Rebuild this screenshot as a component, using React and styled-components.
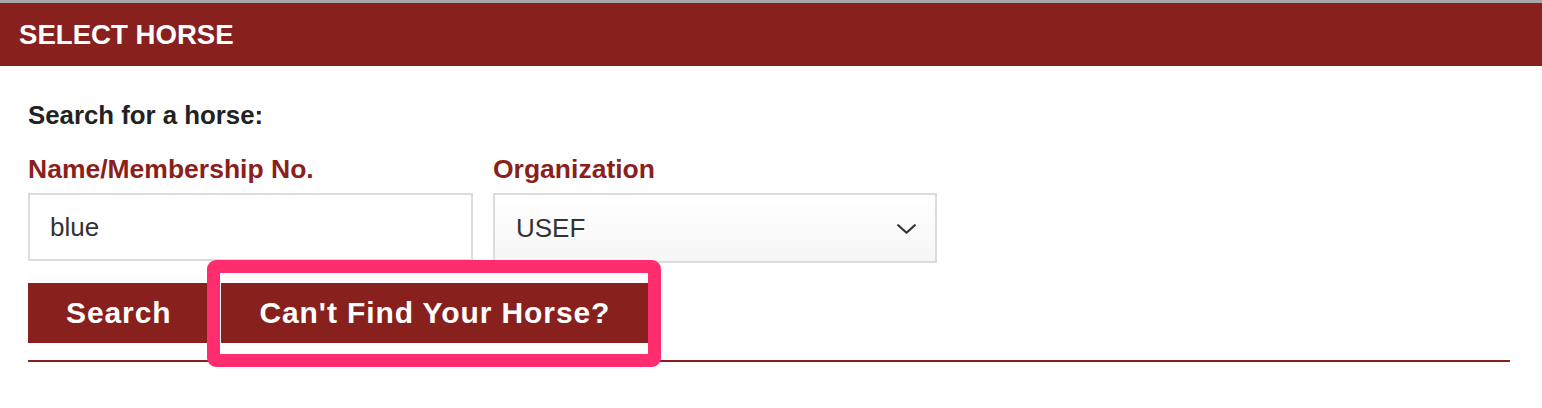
import React from "react";
import styled, { createGlobalStyle } from "styled-components";

const GlobalStyle = createGlobalStyle`
  html, body { margin: 0; padding: 0; background: #fff; }
  body { font-family: "Liberation Sans", Arial, Helvetica, sans-serif; }
  * { box-sizing: border-box; }
`;

const RED = "#88211e";

const Page = styled.div`
  width: 1542px;
  min-height: 408px;
  border-top: 3px solid #a8a8a8;
`;

const Header = styled.div`
  height: 63px;
  background: ${RED};
  display: flex;
  align-items: center;
  padding-left: 19px;
  color: #fff;
  font-weight: 700;
  font-size: 27.6px;
  line-height: 63px;
`;

const Body = styled.div`
  padding: 34px 32px 0 28px;
  display: flex;
  flex-direction: column;
`;

const Intro = styled.div`
  font-size: 25.8px;
  line-height: 30px;
  font-weight: 700;
  color: #222;
`;

const Fields = styled.div`
  display: flex;
  gap: 20px;
  margin-top: 24px;
  align-items: flex-start;
`;

const Field = styled.div`
  display: flex;
  flex-direction: column;
  gap: 9px;
  width: ${(p) => p.$w}px;
`;

const Label = styled.label`
  font-size: 26.5px;
  line-height: 30px;
  font-weight: 700;
  color: #8b1f1b;
`;

const TextInput = styled.input`
  height: 68px;
  width: 100%;
  border: 2px solid #dcdcdc;
  padding: 0 0 0 20px;
  font-family: "Liberation Sans", Arial, sans-serif;
  font-size: 26px;
  color: #333;
  background: #fff;
  outline: none;
`;

const SelectWrap = styled.div`
  position: relative;
  width: 100%;
`;

const Select = styled.select`
  appearance: none;
  -webkit-appearance: none;
  width: 100%;
  height: 70px;
  border: 2px solid #dcdcdc;
  border-radius: 0;
  padding: 0 0 0 21px;
  font-family: "Liberation Sans", Arial, sans-serif;
  font-size: 26px;
  color: #333;
  background: linear-gradient(#ffffff, #f6f6f6);
  outline: none;
`;

const Chevron = styled.svg`
  position: absolute;
  right: 21px;
  top: 31px;
  pointer-events: none;
`;

const Buttons = styled.div`
  display: flex;
  gap: 12px;
  margin-top: 20px;
  align-items: flex-start;
`;

const Button = styled.button`
  display: block;
  height: 60px;
  padding: 0 ${(p) => p.$pad}px;
  background: ${RED};
  color: #fff;
  border: none;
  font-family: "Liberation Sans", Arial, sans-serif;
  font-weight: 700;
  font-size: 30px;
  letter-spacing: 0.9px;
  cursor: pointer;
`;

const Marked = styled.div`
  position: relative;
  display: flex;
  height: 60px;
`;

const Highlight = styled.div`
  position: absolute;
  z-index: 2;
  left: -14px;
  right: -13px;
  top: -23px;
  bottom: -24px;
  border: 13px solid #ff2d6e;
  border-radius: 9px;
  pointer-events: none;
`;

const Rule = styled.hr`
  margin: 17px 0 0 0;
  border: none;
  height: 2px;
  background: ${RED};
  width: 100%;
`;

export default function App() {
  return (
    <>
      <GlobalStyle />
      <Page>
        <Header>SELECT HORSE</Header>
        <Body>
          <Intro>Search for a horse:</Intro>
          <Fields>
            <Field $w={445}>
              <Label>Name/Membership No.</Label>
              <TextInput defaultValue="blue" />
            </Field>
            <Field $w={444}>
              <Label>Organization</Label>
              <SelectWrap>
                <Select defaultValue="USEF">
                  <option value="USEF">USEF</option>
                  <option value="FEI">FEI</option>
                </Select>
                <Chevron width="19" height="10" viewBox="0 0 19 10">
                  <path d="M1.2 1.2 L9.5 8.8 L17.8 1.2" fill="none" stroke="#333" strokeWidth="2.2" strokeLinecap="round" strokeLinejoin="round" />
                </Chevron>
              </SelectWrap>
            </Field>
          </Fields>
          <Buttons>
            <Button $pad={38}>Search</Button>
            <Marked>
              <Button $pad={38}>Can't Find Your Horse?</Button>
              <Highlight />
            </Marked>
          </Buttons>
          <Rule />
        </Body>
      </Page>
    </>
  );
}
